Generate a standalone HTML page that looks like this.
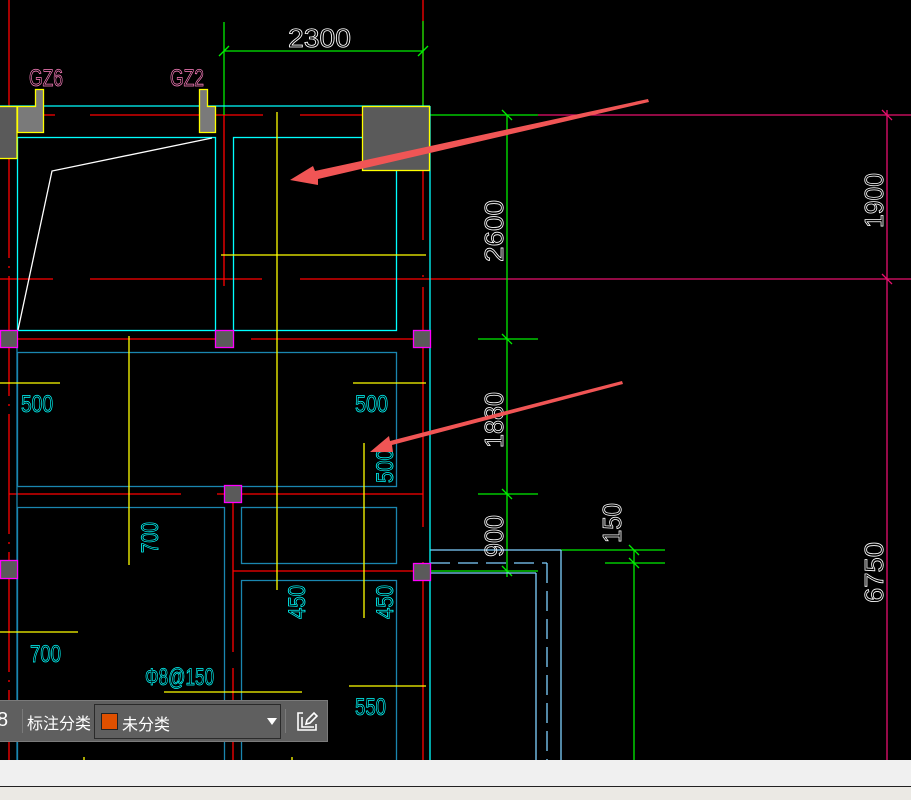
<!DOCTYPE html>
<html><head><meta charset="utf-8"><style>
html,body{margin:0;padding:0;background:#000;width:911px;height:800px;overflow:hidden}
svg{position:absolute;left:0;top:0}
text{font-family:"Liberation Sans",sans-serif;font-weight:normal}
.tb{position:absolute;left:0;top:700px;width:327px;height:40px;background:#5f5f5f;border:1px solid #7b7b7b;border-left:none;font-family:"Liberation Sans","Noto Sans CJK SC",sans-serif;color:#fff;font-size:16px}
</style></head><body>
<svg width="911" height="800" viewBox="0 0 911 800" fill="none" stroke-width="1.3">
<g stroke="#ff0000">
<line x1="9" y1="0" x2="9" y2="760" stroke-dasharray="120 8 2 8"/>
<line x1="423" y1="0" x2="423" y2="760" stroke-dasharray="240 35 2 10"/>
<line x1="224" y1="115" x2="224" y2="286"/>
<line x1="0" y1="115" x2="55" y2="115"/><line x1="90" y1="115" x2="263" y2="115"/><line x1="300" y1="115" x2="423" y2="115"/>
<line x1="0" y1="279" x2="53" y2="279"/><line x1="90" y1="279" x2="262" y2="279"/><line x1="300" y1="279" x2="470" y2="279"/>
<line x1="0" y1="339" x2="215" y2="339"/><line x1="251" y1="339" x2="423" y2="339"/>
<line x1="9" y1="494" x2="181" y2="494"/><line x1="217" y1="494" x2="423" y2="494"/>
<line x1="233" y1="485" x2="233" y2="652"/><line x1="233" y1="668" x2="233" y2="760"/>
<line x1="233" y1="571" x2="423" y2="571"/>
</g>
<g stroke="#e8106e">
<line x1="538" y1="115" x2="911" y2="115"/><line x1="470" y1="279" x2="911" y2="279"/>
<line x1="887" y1="110" x2="887" y2="760"/>
<line x1="882" y1="110" x2="892" y2="120"/><line x1="882" y1="274" x2="892" y2="284"/>
</g>
<g stroke="#00ee00">
<line x1="224" y1="22" x2="224" y2="115"/><line x1="423" y1="21" x2="423" y2="115"/>
<line x1="224" y1="51" x2="423" y2="51"/>
<line x1="219" y1="56" x2="229" y2="46"/><line x1="418" y1="56" x2="428" y2="46"/>
<line x1="423" y1="115" x2="538" y2="115"/>
<line x1="507" y1="115" x2="507" y2="577"/>
<line x1="478" y1="339" x2="538" y2="339"/><line x1="478" y1="494" x2="538" y2="494"/>
<line x1="430" y1="571" x2="538" y2="571"/>
<line x1="502" y1="110" x2="512" y2="120"/><line x1="502" y1="334" x2="512" y2="344"/><line x1="502" y1="489" x2="512" y2="499"/><line x1="502" y1="566" x2="512" y2="576"/>
<line x1="561" y1="550" x2="665" y2="550"/><line x1="605" y1="563" x2="665" y2="563"/>
<line x1="634" y1="550" x2="634" y2="760"/>
<line x1="629" y1="545" x2="639" y2="555"/><line x1="629" y1="558" x2="639" y2="568"/>
</g>
<g stroke="#7fd0ff">
<line x1="430" y1="550" x2="561" y2="550"/><line x1="561" y1="550" x2="561" y2="760"/>
<line x1="430" y1="563" x2="547" y2="563" stroke-dasharray="20 8"/><line x1="547" y1="563" x2="547" y2="760" stroke-dasharray="20 8"/>
<line x1="430" y1="573" x2="536" y2="573"/><line x1="536" y1="573" x2="536" y2="760"/>
</g>
<g stroke="#00ffff">
<line x1="0" y1="106" x2="430" y2="106"/>
<line x1="430" y1="106" x2="430" y2="760"/>
<rect x="17.5" y="137.5" width="198" height="193"/>
<rect x="233.5" y="137.5" width="163" height="193"/>
</g>
<g stroke="#1a86b0">
<line x1="17" y1="330" x2="17" y2="760"/>
<rect x="17.5" y="352.5" width="379" height="134"/>
<path d="M17.5 760V507.5H224.5V760"/>
<rect x="241.5" y="507.5" width="155" height="56"/>
<path d="M241.5 760V580.5H396.5V760"/>
</g>
<g stroke="#ffff00">
<line x1="277" y1="112" x2="277" y2="590"/>
<line x1="221" y1="255" x2="426" y2="255"/>
<line x1="129" y1="336" x2="129" y2="565"/>
<line x1="0" y1="383" x2="60" y2="383"/><line x1="353" y1="383" x2="426" y2="383"/>
<line x1="364" y1="443" x2="364" y2="618"/>
<line x1="0" y1="632" x2="78" y2="632"/>
<line x1="164" y1="692" x2="302" y2="692"/>
<line x1="349" y1="686" x2="426" y2="686"/>
<line x1="84" y1="757" x2="84" y2="760"/><line x1="292" y1="757" x2="292" y2="760"/>
</g>
<polyline points="18,330 52,171 212,138" stroke="#fff"/>
<g fill="#5a5a5a" stroke="#ffff00">
<rect x="-1" y="106.5" width="18" height="52"/>
<rect x="362.5" y="106.5" width="67" height="64"/>
</g>
<g fill="#7a7a7a" stroke="#ffff00">
<path d="M35.5 89.5H43.5V132.5H17.5V106.5H35.5Z"/>
<path d="M199.5 89.5H207.5V106.5H215.5V132.5H199.5Z"/>
</g>
<g fill="#5a5a5a" stroke="#ff00ff">
<rect x="0.5" y="330.5" width="17" height="17"/>
<rect x="215.5" y="330.5" width="18" height="17"/>
<rect x="413.5" y="330.5" width="17" height="17"/>
<rect x="224.5" y="485.5" width="17" height="17"/>
<rect x="0.5" y="560.5" width="17" height="18"/>
<rect x="413.5" y="563.5" width="17" height="17"/>
</g>
<g font-size="26" fill="none" stroke="#fff" stroke-width="0.8">
<text x="288" y="47" textLength="63" lengthAdjust="spacingAndGlyphs">2300</text>
<text transform="translate(503,262) rotate(-90)" textLength="62" lengthAdjust="spacingAndGlyphs">2600</text>
<text transform="translate(503,448) rotate(-90)" textLength="56" lengthAdjust="spacingAndGlyphs">1880</text>
<text transform="translate(503,557) rotate(-90)" textLength="42" lengthAdjust="spacingAndGlyphs">900</text>
<text transform="translate(621,543) rotate(-90)" textLength="40" lengthAdjust="spacingAndGlyphs">150</text>
<text transform="translate(883,228) rotate(-90)" textLength="55" lengthAdjust="spacingAndGlyphs">1900</text>
<text transform="translate(883,603) rotate(-90)" textLength="61" lengthAdjust="spacingAndGlyphs">6750</text>
</g>
<g font-size="24" fill="none" stroke="#ff80c0" stroke-width="0.8">
<text x="29" y="86" textLength="34" lengthAdjust="spacingAndGlyphs">GZ6</text>
<text x="170" y="86" textLength="34" lengthAdjust="spacingAndGlyphs">GZ2</text>
</g>
<g font-size="24" fill="none" stroke="#00ffff" stroke-width="0.8">
<text x="21" y="412" textLength="32" lengthAdjust="spacingAndGlyphs">500</text>
<text x="355" y="412" textLength="33" lengthAdjust="spacingAndGlyphs">500</text>
<text transform="translate(393,483) rotate(-90)" textLength="34" lengthAdjust="spacingAndGlyphs">500</text>
<text transform="translate(158,553) rotate(-90)" textLength="31" lengthAdjust="spacingAndGlyphs">700</text>
<text transform="translate(305,619) rotate(-90)" textLength="34" lengthAdjust="spacingAndGlyphs">450</text>
<text transform="translate(393,619) rotate(-90)" textLength="34" lengthAdjust="spacingAndGlyphs">450</text>
<text x="30" y="662" textLength="31" lengthAdjust="spacingAndGlyphs">700</text>
<text x="145" y="685" textLength="69" lengthAdjust="spacingAndGlyphs">Φ8@150</text>
<text x="355" y="715" textLength="31" lengthAdjust="spacingAndGlyphs">550</text>
</g>
<g fill="#f05555" stroke="none">
<polygon points="648,99 649,102 318,179 318,185 290,180 313,166 315,171"/>
<polygon points="622,381 623,384 392,445 393,452 370,452 389,436 390,441"/>
</g>
<rect x="0" y="760" width="911" height="26" fill="#f0f0f0"/>
<rect x="0" y="786" width="911" height="1" fill="#222"/>
<rect x="0" y="787" width="911" height="13" fill="#ebe9e4"/>
</svg>
<div class="tb">
 <div style="position:absolute;left:-3px;top:8px;font-size:20px">8</div>
 <div style="position:absolute;left:22px;top:8px;width:1px;height:24px;background:#7a7a7a"></div>
 <div style="position:absolute;left:27px;top:9px">标注分类</div>
 <div style="position:absolute;left:94px;top:3px;width:185px;height:33px;border:1px solid #2a2a2a;background:#5f5f5f">
  <div style="position:absolute;left:6px;top:8px;width:15px;height:15px;background:#e05000;border:1px solid #222"></div>
  <div style="position:absolute;left:27px;top:6px">未分类</div>
  <div style="position:absolute;left:172px;top:13px;width:0;height:0;border-left:5px solid transparent;border-right:5px solid transparent;border-top:7px solid #fff"></div>
 </div>
 <div style="position:absolute;left:285px;top:8px;width:1px;height:24px;background:#7a7a7a"></div>
 <svg style="left:295px;top:9px" width="24" height="24" viewBox="0 0 24 24" fill="none" stroke="#fff" stroke-width="1.6">
  <path d="M8 3H3V20H21V14"/><path d="M7 7V17H19"/><path d="M11 14L12 10L19 3L22 6L15 13Z"/>
 </svg>
</div>
</body></html>
